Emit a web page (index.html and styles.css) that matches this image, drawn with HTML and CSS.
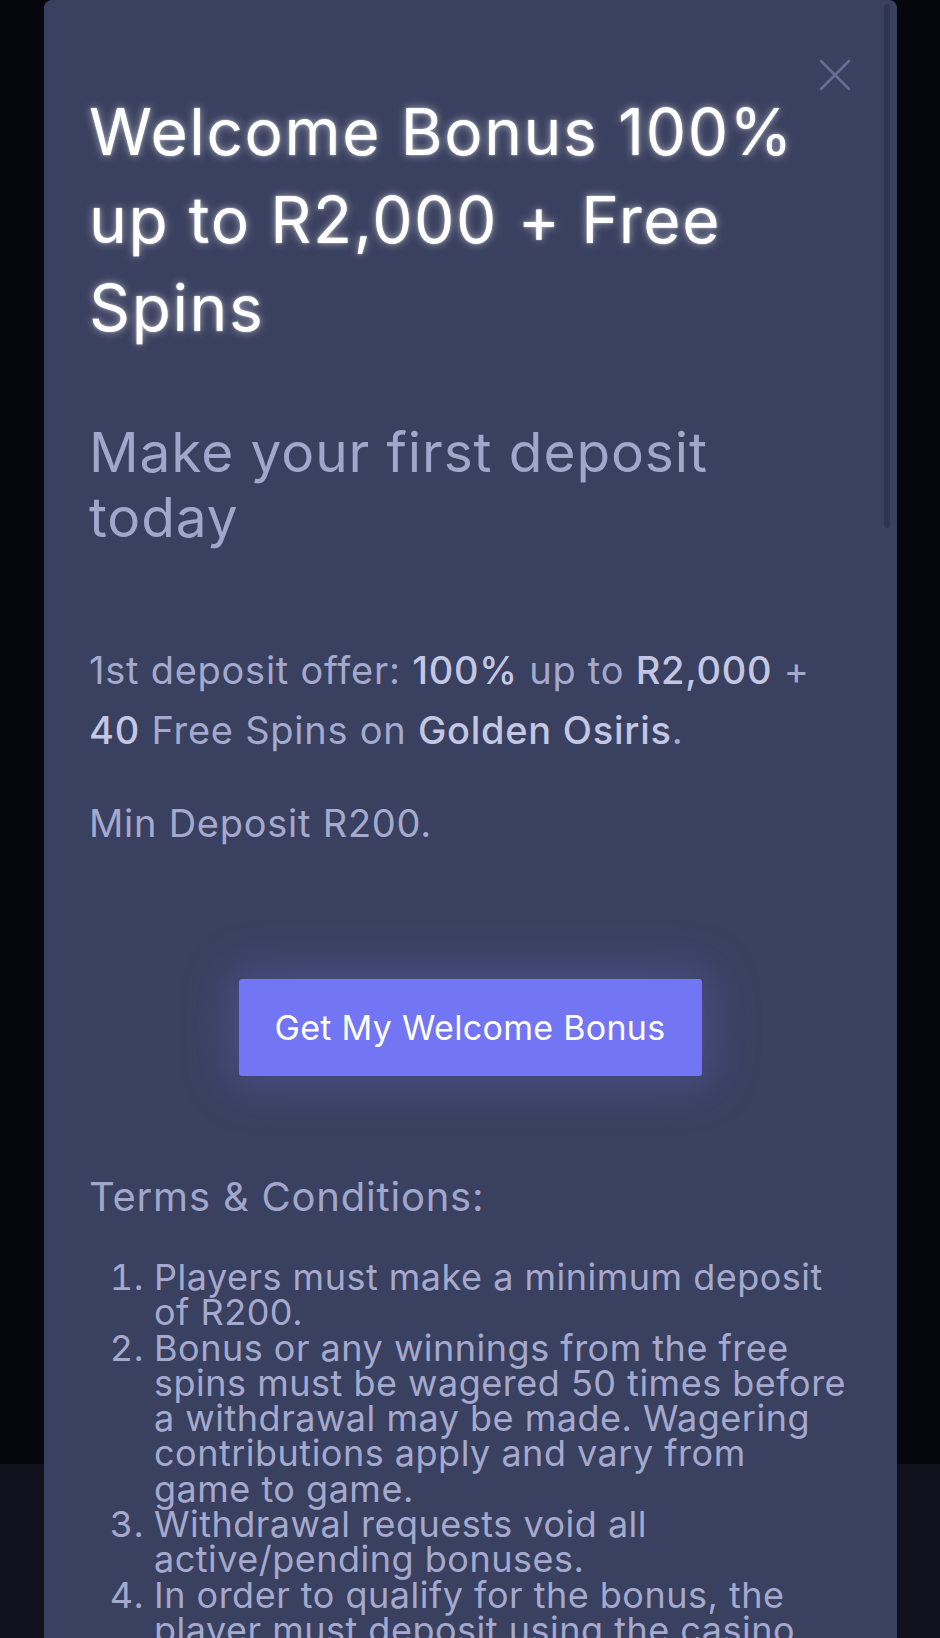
FILE: index.html
```html
<!DOCTYPE html>
<html lang="en">
<head>
<meta charset="utf-8">
<title>Welcome Bonus</title>
<link rel="stylesheet" href="styles.css">
</head>
<body>
<div class="page">
  <div class="backdrop"></div>
  <div class="footer-band"></div>
</div>
<div class="modal">
  <button class="close" aria-label="Close">
    <svg width="32" height="32" viewBox="0 0 32 32"><path d="M2 2 L30 30 M30 2 L2 30" stroke="#686e93" stroke-width="2.6" fill="none" stroke-linecap="round"/></svg>
  </button>
  <div class="thumb"></div>
  <div class="content">
    <h1 class="title">Welcome Bonus 100% up to R2,000 + Free Spins</h1>
    <h2 class="subtitle">Make your first deposit today</h2>
    <p class="offer">1st deposit offer: <b>100%</b> up to <b>R2,000</b> + <b>40</b> Free Spins on <b>Golden Osiris</b>.</p>
    <p class="offer">Min Deposit R200.</p>
    <div class="cta-row"><a class="cta" href="#">Get My Welcome Bonus</a></div>
    <h3 class="terms-title">Terms &amp; Conditions:</h3>
    <ol class="terms">
      <li>Players must make a minimum deposit of R200.</li>
      <li>Bonus or any winnings from the free spins must be wagered 50 times before a withdrawal may be made. Wagering contributions apply and vary from game&nbsp;to game.</li>
      <li>Withdrawal requests void all active/pending bonuses.</li>
      <li>In order to qualify for the bonus, the player must deposit using the casino bonus code.</li>
    </ol>
  </div>
</div>
</body>
</html>
```
FILE: styles.css
```css
html, body {
  margin: 0;
  padding: 0;
}
body {
  background: #06070d;
  font-family: "Inter", "Noto Sans", sans-serif;
  overflow: hidden;
  height: 1638px;
}
.page {
  display: flex;
  flex-direction: column;
  height: 1638px;
}
.backdrop {
  height: 1464px;
  background: #06070d;
}
.footer-band {
  flex: 1;
  background: #11121e;
}
.modal {
  position: absolute;
  left: 44px;
  top: 0;
  width: 853px;
  height: 1700px;
  background: #3a405f;
  border-radius: 8px 8px 0 0;
  overflow: hidden;
}
.close {
  position: absolute;
  top: 59px;
  left: 775px;
  width: 32px;
  height: 32px;
  padding: 0;
  border: 0;
  background: none;
}
.close svg { display: block; }
.thumb {
  position: absolute;
  left: 840px;
  top: 4px;
  width: 6px;
  height: 524px;
  border-radius: 3px;
  background: #30354f;
}
.content {
  padding: 88px 40px 0 45px;
}
.title {
  margin: 0;
  font-size: 64px;
  line-height: 88px;
  font-weight: 400;
  color: #ffffff;
  letter-spacing: 1.6px;
  text-shadow: 0 0 8px rgba(255,255,255,0.55), 0 0 2px rgba(255,255,255,0.6);
}
.subtitle {
  margin: 68px 0 0;
  font-size: 55px;
  line-height: 65px;
  font-weight: 400;
  color: #a1a6cb;
  letter-spacing: 0.9px;
}
.offer {
  margin: 90px 0 0;
  font-size: 38px;
  line-height: 60px;
  color: #a4a9cd;
  letter-spacing: 0.75px;
}
.offer + .offer {
  margin-top: 33px;
}
.offer b {
  font-weight: 500;
  color: #c3c7e3;
}
.cta-row {
  display: flex;
  justify-content: center;
  padding-right: 6px;
  margin-top: 126px;
}
.cta {
  display: flex;
  align-items: center;
  justify-content: center;
  width: 463px;
  height: 97px;
  background: #7276f5;
  border-radius: 3px;
  color: #ffffff;
  font-size: 34px;
  letter-spacing: 0.3px;
  text-decoration: none;
  box-shadow: 0 0 50px 8px rgba(114,118,245,0.3);
}
.terms-title {
  margin: 96px 0 0;
  font-size: 40px;
  line-height: 50px;
  font-weight: 400;
  color: #a1a6cb;
  letter-spacing: 0.8px;
}
.terms {
  margin: 38px 0 0;
  padding-left: 65px;
  font-size: 36px;
  line-height: 35.3px;
  color: #a4a9cd;
  letter-spacing: 0.5px;
}
```
